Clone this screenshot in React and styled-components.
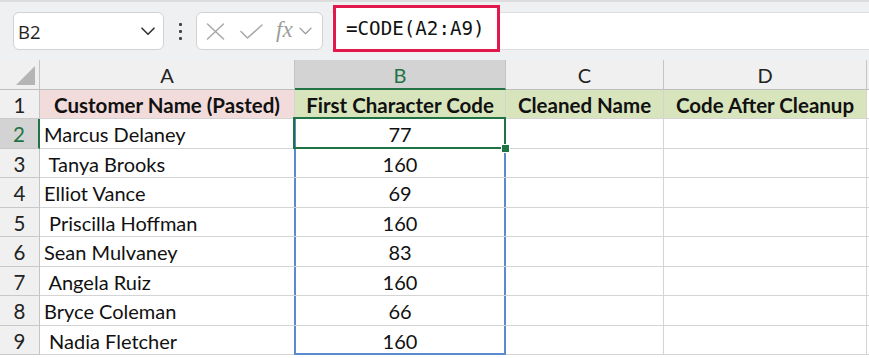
import React from "react";
import styled, { createGlobalStyle, css } from "styled-components";

const GlobalStyle = createGlobalStyle`
  html, body { margin: 0; padding: 0; background: #ffffff; }
  body { font-family: "Lato", "Liberation Sans", sans-serif; }
  * { box-sizing: border-box; }
`;

const GREEN = "#217346";
const BLUE = "#5a8ad0";

const Page = styled.div`
  width: 869px;
  height: 358px;
  overflow: hidden;
  background: #ffffff;
`;

const Toolbar = styled.div`
  height: 60px;
  display: flex;
  align-items: center;
  padding-left: 13px;
  background: #eff0f2;
  border-top: 2px solid #dcdcdc;
`;

const NameBox = styled.div`
  width: 151px;
  height: 38px;
  display: flex;
  align-items: center;
  justify-content: space-between;
  padding: 0 8px 0 4px;
  background: #ffffff;
  border: 1px solid #d2d2d2;
  border-radius: 6px;
  font-family: "Open Sans", "Noto Sans", sans-serif;
  font-size: 18.5px;
  color: #1f1f1f;
`;

const Dots = styled.div`
  width: 32px;
  display: flex;
  flex-direction: column;
  align-items: center;
  gap: 4px;
`;

const Dot = styled.span`
  width: 3px;
  height: 3px;
  border-radius: 1px;
  background: #444;
`;

const FnBox = styled.div`
  width: 127px;
  height: 38px;
  display: flex;
  align-items: center;
  padding: 0 6px 0 8px;
  background: #ffffff;
  border: 1px solid #d2d2d2;
  border-radius: 6px;
`;

const IconSlot = styled.span`
  display: flex;
  align-items: center;
  justify-content: center;
  width: ${(p) => p.$w}px;
  margin-right: ${(p) => p.$mr || 0}px;
`;

const Fx = styled.span`
  font-family: "Liberation Serif", "DejaVu Serif", serif;
  font-style: italic;
  font-size: 23px;
  color: #9c9c9c;
  line-height: 1;
  margin-right: 6px;
  margin-top: -3px;
`;

const FormulaArea = styled.div`
  flex: 1;
  height: 38px;
  margin-left: 9px;
  display: flex;
  align-items: center;
  background: #ffffff;
  border-top: 1px solid #dedede;
  border-bottom: 1px solid #dedede;
  padding-left: 1px;
`;

const FormulaHighlight = styled.div`
  height: 47px;
  width: 167px;
  margin-top: -5px;
  border: 3px solid #e2194c;
  display: flex;
  align-items: center;
  padding-left: 10px;
  font-family: "DejaVu Sans Mono", "Liberation Mono", monospace;
  font-size: 19.2px;
  color: #111;
  background: #ffffff;
`;

const Grid = styled.div`
  display: grid;
  grid-template-columns: 40px 255px 211px 158px 203px 1fr;
  grid-template-rows: 30px 29px 30px 29px 30px 29px 30px 29px 30px 29px;
`;

const HeadCell = styled.div`
  position: relative;
  display: flex;
  align-items: center;
  justify-content: center;
  background: ${(p) => (p.$active ? "#d3d3d3" : "#f0f0f0")};
  color: ${(p) => (p.$active ? GREEN : "#222")};
  border-right: 1px solid #c4c4c4;
  border-bottom: ${(p) => (p.$active ? `2px solid ${GREEN}` : "1px solid #bdbdbd")};
  font-size: 20px;
  padding-top: 1px;
`;

const Corner = styled.div`
  background: #f0f0f0;
  border-right: 1px solid #c4c4c4;
  border-bottom: 1px solid #bdbdbd;
  display: flex;
  align-items: flex-end;
  justify-content: flex-end;
  padding: 0 4px 4px 0;
`;

const RowHead = styled.div`
  display: flex;
  align-items: center;
  justify-content: center;
  background: ${(p) => (p.$active ? "#d3d3d3" : "#f0f0f0")};
  color: ${(p) => (p.$active ? GREEN : "#222")};
  border-right: ${(p) => (p.$active ? `2px solid ${GREEN}` : "1px solid #c4c4c4")};
  border-bottom: 1px solid #c9c9c9;
  font-size: 20.5px;
  padding-top: 1px;
`;

const Cell = styled.div`
  position: relative;
  display: flex;
  align-items: center;
  justify-content: ${(p) => (p.$center ? "center" : "flex-start")};
  padding-left: ${(p) => (p.$center ? 0 : 4)}px;
  background: ${(p) => p.$bg || "#ffffff"};
  border-right: 1px solid #d4d4d4;
  border-bottom: 1px solid #d4d4d4;
  font-size: ${(p) => (p.$bold ? 20.5 : 20)}px;
  font-weight: ${(p) => (p.$bold ? 700 : 400)};
  color: #111;
  white-space: pre;
  padding-top: 1px;

  ${(p) =>
    p.$range &&
    css`
      &::before {
        content: "";
        position: absolute;
        top: 0;
        left: -1px;
        right: -1px;
        bottom: ${p.$last ? "-1px" : "0"};
        border-left: 2px solid ${BLUE};
        border-right: 2px solid ${BLUE};
        border-bottom: ${p.$last ? `2px solid ${BLUE}` : "none"};
        pointer-events: none;
      }
    `}

  ${(p) =>
    p.$selected &&
    css`
      &::after {
        content: "";
        position: absolute;
        top: -2px;
        left: -2px;
        right: -1px;
        bottom: -1px;
        border: 2px solid ${GREEN};
        pointer-events: none;
        z-index: 2;
      }
    `}
`;

const FillHandle = styled.span`
  position: absolute;
  right: -5px;
  bottom: -5px;
  width: 9px;
  height: 9px;
  background: ${GREEN};
  border: 1px solid #ffffff;
  z-index: 3;
`;

const Chevron = ({ size = 14, color = "#333", sw = 1.6 }) => (
  <svg width={size} height={size * 0.6} viewBox="0 0 14 8" fill="none">
    <path d="M1 1 L7 7 L13 1" stroke={color} strokeWidth={sw} strokeLinecap="round" strokeLinejoin="round" />
  </svg>
);

const XIcon = () => (
  <svg width="19" height="17" viewBox="0 0 19 17" fill="none">
    <path d="M1.5 1 L17.5 16 M17.5 1 L1.5 16" stroke="#a8a8a8" strokeWidth="1.5" strokeLinecap="round" />
  </svg>
);

const CheckIcon = () => (
  <svg width="23" height="15" viewBox="0 0 23 15" fill="none">
    <path d="M1 7.5 L7.5 14 L22 1" stroke="#a8a8a8" strokeWidth="1.5" strokeLinecap="round" strokeLinejoin="round" />
  </svg>
);

const CornerTriangle = () => (
  <svg width="19" height="19" viewBox="0 0 19 19">
    <polygon points="19,0 19,19 0,19" fill="#b5b5b5" />
  </svg>
);

const names = [
  "Marcus Delaney",
  "\u00A0Tanya Brooks",
  "Elliot Vance",
  "\u00A0Priscilla Hoffman",
  "Sean Mulvaney",
  "\u00A0Angela Ruiz",
  "Bryce Coleman",
  "\u00A0Nadia Fletcher",
];
const codes = [77, 160, 69, 160, 83, 160, 66, 160];

export default function App() {
  return (
    <Page>
      <GlobalStyle />
      <Toolbar>
        <NameBox>
          <span>B2</span>
          <Chevron size={14} color="#333" />
        </NameBox>
        <Dots>
          <Dot />
          <Dot />
          <Dot />
        </Dots>
        <FnBox>
          <IconSlot $w={20} $mr={14}>
            <XIcon />
          </IconSlot>
          <IconSlot $w={24} $mr={13}>
            <CheckIcon />
          </IconSlot>
          <Fx>fx</Fx>
          <IconSlot $w={14}>
            <Chevron size={13} color="#9c9c9c" sw={1.4} />
          </IconSlot>
        </FnBox>
        <FormulaArea>
          <FormulaHighlight>=CODE(A2:A9)</FormulaHighlight>
        </FormulaArea>
      </Toolbar>
      <Grid>
        <Corner>
          <CornerTriangle />
        </Corner>
        <HeadCell>A</HeadCell>
        <HeadCell $active>B</HeadCell>
        <HeadCell>C</HeadCell>
        <HeadCell>D</HeadCell>
        <HeadCell />

        <RowHead>1</RowHead>
        <Cell $bold $center $bg="#f2dcdb">Customer Name (Pasted)</Cell>
        <Cell $bold $center $bg="#d8e4bc">First Character Code</Cell>
        <Cell $bold $center $bg="#d8e4bc">Cleaned Name</Cell>
        <Cell $bold $center $bg="#d8e4bc">Code After Cleanup</Cell>
        <Cell />

        {names.map((n, i) => (
          <React.Fragment key={i}>
            <RowHead $active={i === 0}>{i + 2}</RowHead>
            <Cell>{n}</Cell>
            <Cell $center $range $last={i === names.length - 1} $selected={i === 0}>
              {codes[i]}
              {i === 0 && <FillHandle />}
            </Cell>
            <Cell />
            <Cell />
            <Cell />
          </React.Fragment>
        ))}
      </Grid>
    </Page>
  );
}
